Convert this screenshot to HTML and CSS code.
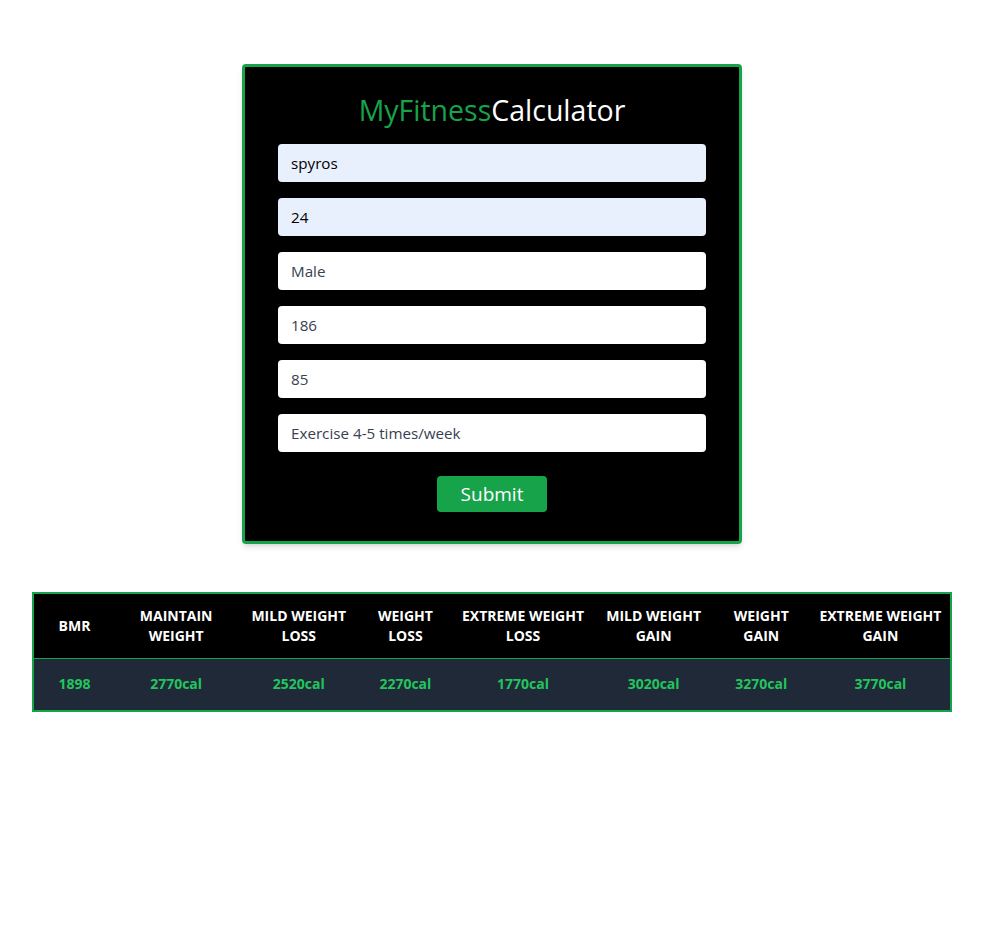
FILE: index.html
```html
<!DOCTYPE html>
<html lang="en">
<head>
<meta charset="utf-8">
<title>MyFitnessCalculator</title>
<link rel="stylesheet" href="styles.css">
</head>
<body>
<main class="page">
  <form class="card">
    <h1 class="title"><span class="title-accent">MyFitness</span>Calculator</h1>
    <input class="field field-autofill" type="text" value="spyros">
    <input class="field field-autofill" type="text" value="24">
    <input class="field" type="text" value="Male">
    <input class="field" type="text" value="186">
    <input class="field" type="text" value="85">
    <input class="field" type="text" value="Exercise 4-5 times/week">
    <button class="submit" type="button">Submit</button>
  </form>

  <div class="table-wrap">
    <table class="results">
      <colgroup>
        <col class="c1"><col class="c2"><col class="c3"><col class="c4">
        <col class="c5"><col class="c6"><col class="c7"><col class="c8">
      </colgroup>
      <thead>
        <tr>
          <th>BMR</th>
          <th>Maintain Weight</th>
          <th>Mild Weight Loss</th>
          <th>Weight Loss</th>
          <th>Extreme Weight Loss</th>
          <th>Mild Weight Gain</th>
          <th>Weight Gain</th>
          <th>Extreme Weight Gain</th>
        </tr>
      </thead>
      <tbody>
        <tr>
          <td>1898</td>
          <td>2770cal</td>
          <td>2520cal</td>
          <td>2270cal</td>
          <td>1770cal</td>
          <td>3020cal</td>
          <td>3270cal</td>
          <td>3770cal</td>
        </tr>
      </tbody>
    </table>
  </div>
</main>
</body>
</html>
```

FILE: styles.css
```css
* { box-sizing: border-box; }

html, body {
  margin: 0;
  padding: 0;
  background: #ffffff;
}

body {
  font-family: "Open Sans", "Noto Sans", sans-serif;
}

.page {
  padding-top: 64px;
  display: flex;
  flex-direction: column;
  align-items: center;
}

.card {
  width: 500px;
  background: #000000;
  border: 3px solid #16a34a;
  border-radius: 4px;
  box-shadow: 0 4px 6px -1px rgba(0,0,0,0.12), 0 2px 4px -2px rgba(0,0,0,0.1);
  padding: 25px 33px 29px;
  display: flex;
  flex-direction: column;
  gap: 16px;
  align-items: center;
}

.title {
  margin: 0;
  font-size: 28.5px;
  line-height: 36px;
  font-weight: 400;
  color: #ffffff;
}

.title-accent { color: #16a34a; }

.field {
  width: 100%;
  height: 38px;
  border: 0;
  border-radius: 4px;
  background: #ffffff;
  color: #374151;
  font-family: inherit;
  font-size: 15.2px;
  padding: 0 13px;
  outline: none;
}

.field-autofill {
  background: #e8f0fe;
  color: #000000;
}

.submit {
  margin-top: 8px;
  height: 36px;
  width: 110px;
  border: 0;
  border-radius: 4px;
  background: #16a34a;
  color: #ffffff;
  font-family: inherit;
  font-size: 19px;
  padding: 0;
}

.table-wrap {
  width: 100%;
  padding: 0 32px;
  margin-top: 48px;
}

.results {
  width: 100%;
  table-layout: fixed;
  border-collapse: separate;
  border-spacing: 0;
  border: 2px solid #16a34a;
}

.c1 { width: 81px; }
.c2 { width: 122px; }
.c3 { width: 123px; }
.c4 { width: 90px; }
.c5 { width: 145px; }
.c6 { width: 116px; }
.c7 { width: 99px; }
.c8 { width: 139px; }

.results th {
  background: #000000;
  color: #ffffff;
  font-size: 14px;
  font-weight: 700;
  line-height: 20px;
  text-transform: uppercase;
  text-align: center;
  padding: 12px 5px;
  border-bottom: 1px solid #16a34a;
}

.results td {
  background: #1f2937;
  color: #22c55e;
  font-size: 14px;
  font-weight: 700;
  line-height: 20px;
  text-align: center;
  padding: 15px 5px 16px;
}
```
